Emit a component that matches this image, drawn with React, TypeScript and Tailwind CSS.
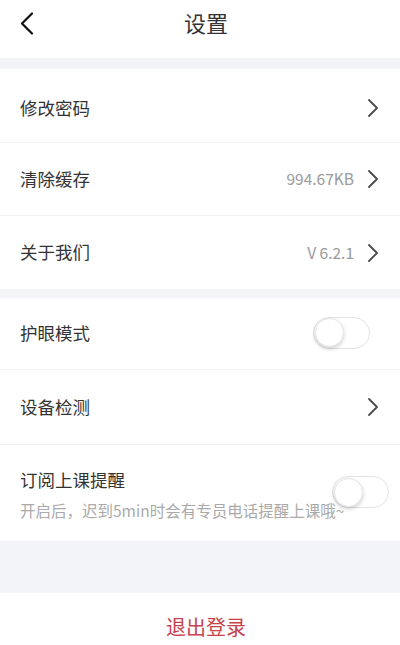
import React, { useState } from "react";

const font = { fontFamily: '"Noto Sans CJK SC", "Noto Sans", sans-serif' };

const Chevron = () => (
  <svg width="12" height="20" viewBox="0 0 12 20" fill="none" className="shrink-0">
    <path d="M2 2l8 8-8 8" stroke="#4a4a4a" strokeWidth="1.8" strokeLinecap="round" strokeLinejoin="round" />
  </svg>
);

const Toggle = ({ on, onClick }: { on: boolean; onClick: () => void }) => (
  <button
    onClick={onClick}
    className={`w-[57px] h-[32px] rounded-full border border-[#e3e3e3] flex items-center p-[1px] ${
      on ? "bg-[#c8414b] justify-end" : "bg-white justify-start"
    }`}
  >
    <span className="w-[29px] h-[29px] rounded-full bg-white border border-[#e6e6e6] shadow-[0_2px_4px_rgba(0,0,0,0.18)]" />
  </button>
);

const Row = ({ label, value, h }: { label: string; value?: string; h: string }) => (
  <div className={`flex items-center justify-between px-5 ${h}`}>
    <span className="text-[17.5px] text-[#333]">{label}</span>
    <div className="flex items-center gap-[13px] pr-[1px]">
      {value && <span className="text-[15.5px] text-[#9a9a9a]">{value}</span>}
      <Chevron />
    </div>
  </div>
);

export default function App() {
  const [eyeMode, setEyeMode] = useState(false);
  const [remind, setRemind] = useState(false);

  return (
    <div className="w-[400px] h-[645px] bg-white overflow-hidden" style={font}>
      {/* header */}
      <div className="relative h-[58px] flex items-center justify-center">
        <button className="absolute left-[20px] top-[12px]">
          <svg width="14" height="23" viewBox="0 0 14 23" fill="none">
            <path d="M12 1.5L2 11.5l10 10" stroke="#111" strokeWidth="2.2" strokeLinecap="round" strokeLinejoin="round" />
          </svg>
        </button>
        <h1 className="text-[22px] text-[#333] pl-[12px] -mt-[14px]">设置</h1>
      </div>

      <div className="h-[11px] bg-[#f3f4f7]" />

      <Row label="修改密码" h="h-[73px] pt-[5px]" />
      <div className="h-px bg-[#f2f2f2]" />
      <Row label="清除缓存" value="994.67KB" h="h-[72px]" />
      <div className="h-px bg-[#f2f2f2]" />
      <Row label="关于我们" value="V 6.2.1" h="h-[73px]" />

      <div className="h-[9px] bg-[#f3f4f7]" />

      <div className="flex items-center justify-between px-5 h-[71px]">
        <span className="text-[17.5px] text-[#333]">护眼模式</span>
        <div className="pr-[10px] -mt-[2px]">
          <Toggle on={eyeMode} onClick={() => setEyeMode(!eyeMode)} />
        </div>
      </div>
      <div className="h-px bg-[#f2f2f2]" />
      <Row label="设备检测" h="h-[74px]" />
      <div className="h-px bg-[#f2f2f2]" />

      <div className="relative h-[96px] px-5 pt-[22px]">
        <p className="text-[17.5px] text-[#333] leading-[26px]">订阅上课提醒</p>
        <p className="text-[15.5px] text-[#aaa] leading-[24px] mt-[5px] whitespace-nowrap">
          开启后，迟到5min时会有专员电话提醒上课哦~
        </p>
        <div className="absolute right-[11px] top-[31px]">
          <Toggle on={remind} onClick={() => setRemind(!remind)} />
        </div>
      </div>

      <div className="h-[52px] bg-[#f3f4f7]" />

      <div className="flex justify-center pt-[19px]">
        <button className="text-[20px] text-[#c8414b] pl-[12px]">退出登录</button>
      </div>
    </div>
  );
}
